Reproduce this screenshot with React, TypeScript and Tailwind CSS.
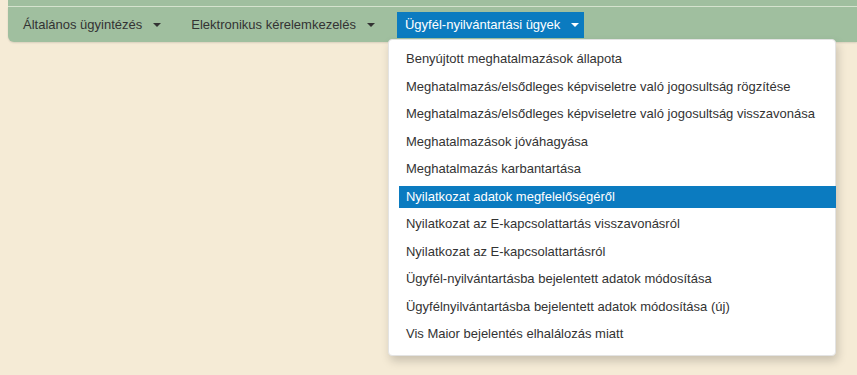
const navItems = ["Általános ügyintézés", "Elektronikus kérelemkezelés", "Ügyfél-nyilvántartási ügyek"];

const menuItems = [
  "Benyújtott meghatalmazások állapota",
  "Meghatalmazás/elsődleges képviseletre való jogosultság rögzítése",
  "Meghatalmazás/elsődleges képviseletre való jogosultság visszavonása",
  "Meghatalmazások jóváhagyása",
  "Meghatalmazás karbantartása",
  "Nyilatkozat adatok megfelelőségéről",
  "Nyilatkozat az E-kapcsolattartás visszavonásról",
  "Nyilatkozat az E-kapcsolattartásról",
  "Ügyfél-nyilvántartásba bejelentett adatok módosítása",
  "Ügyfélnyilvántartásba bejelentett adatok módosítása (új)",
  "Vis Maior bejelentés elhalálozás miatt",
];

function Caret({ light }: { light?: boolean }) {
  return (
    <span
      className={`ml-[11px] inline-block h-0 w-0 border-x-[4px] border-t-[4px] border-x-transparent ${
        light ? "border-t-white" : "border-t-[#333]"
      }`}
    />
  );
}

export default function App() {
  return (
    <div className="min-h-[375px] w-full bg-[#f5ebd6] pl-[8px] text-[13px] text-[#333] [font-family:'Liberation_Sans',Arial,sans-serif]">
      <div className="h-[6px] bg-[#a0bf9f]" />
      <div className="h-px bg-[#d6e4cf]" />
      <nav className="flex h-[35px] items-start gap-[17px] rounded-bl-[6px] bg-[#a0bf9f] pl-[7px] pt-[5px] shadow-[0_1px_2px_rgba(0,0,0,0.12)]">
        {navItems.map((item, i) => {
          const active = i === 2;
          return (
            <div key={item} className="relative">
              <div
                className={`flex h-[26px] items-center pl-[8px] pr-[5px] ${
                  active ? "bg-[#0b7bc0] text-white" : ""
                }`}
              >
                <span>{item}</span>
                <Caret light={active} />
              </div>
              {active && (
                <ul className="absolute left-[-9px] top-[27px] z-10 flex w-[448px] flex-col gap-[5.5px] rounded-[4px] border border-[#e3e3e3] bg-white pb-[10px] pt-[8px] pl-[10px] shadow-[2px_5px_10px_rgba(0,0,0,0.18)]">
                  {menuItems.map((m, j) => (
                    <li
                      key={m}
                      className={`flex h-[22px] items-center whitespace-nowrap px-[7px] ${
                        j === 5 ? "-mr-px bg-[#0b7bc0] text-white" : "text-[#333]"
                      }`}
                    >
                      {m}
                    </li>
                  ))}
                </ul>
              )}
            </div>
          );
        })}
      </nav>
    </div>
  );
}
